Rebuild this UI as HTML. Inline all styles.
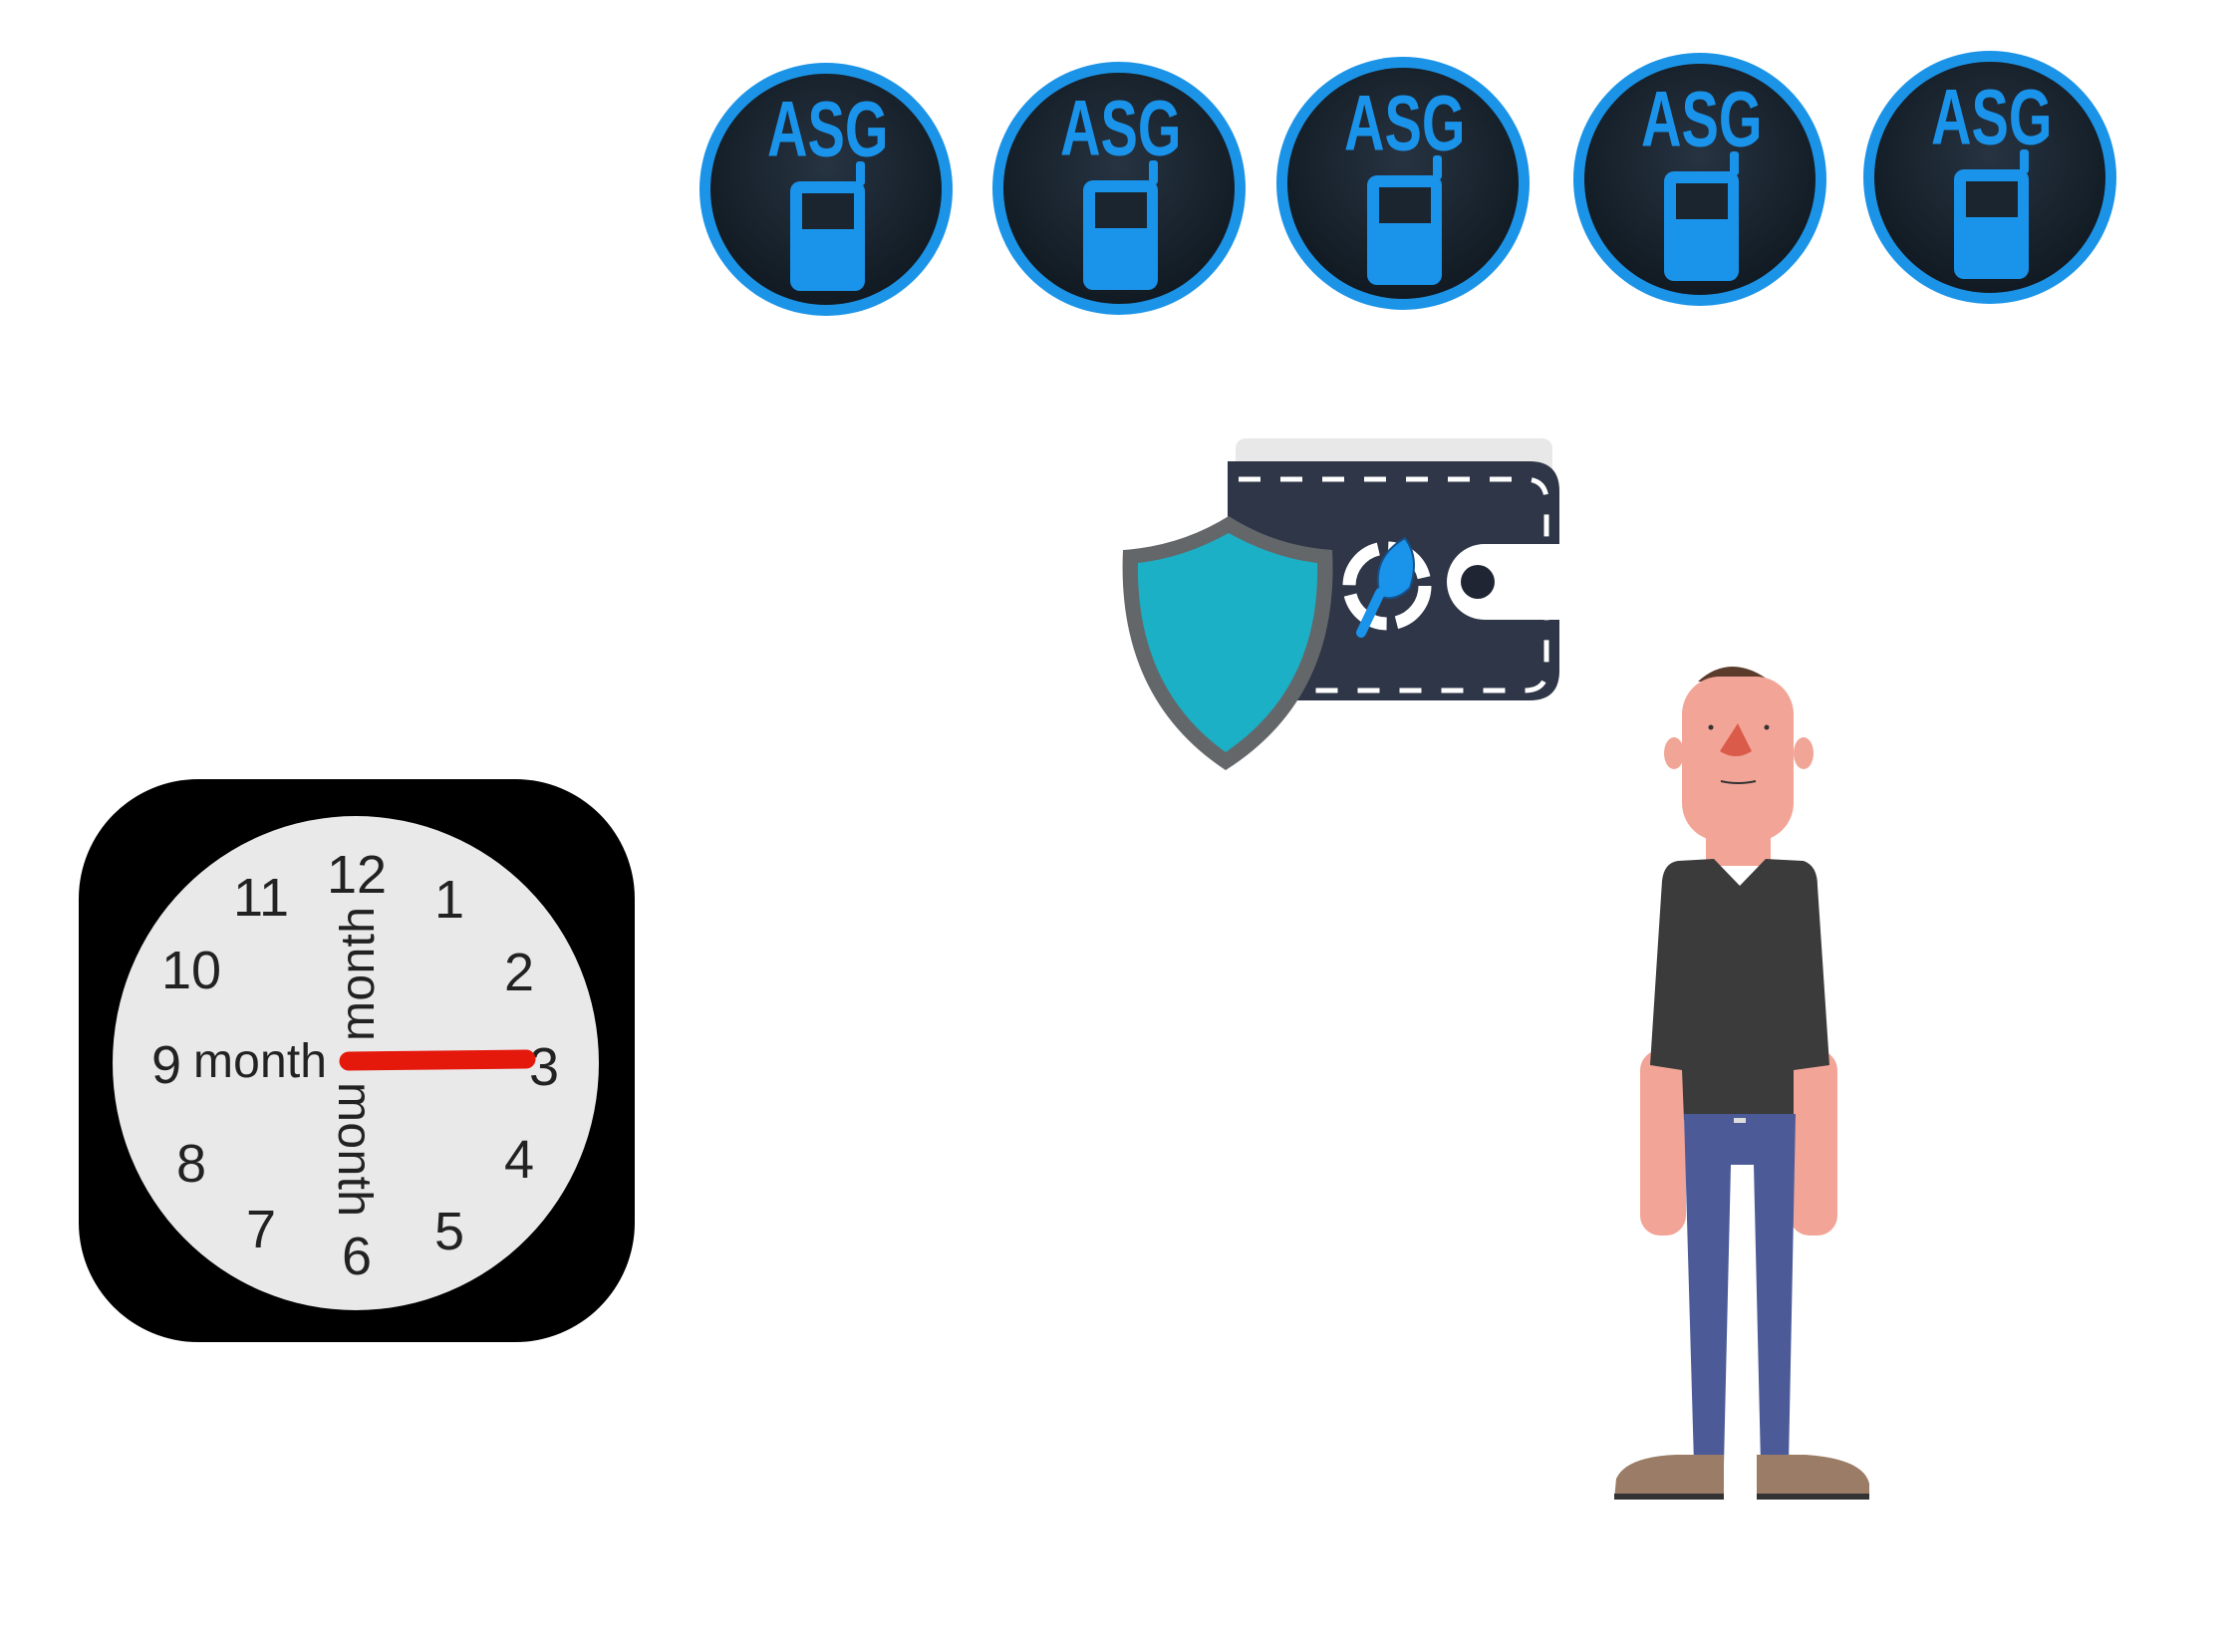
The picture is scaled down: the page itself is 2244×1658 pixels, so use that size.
<!DOCTYPE html>
<html><head><meta charset="utf-8"><style>
html,body{margin:0;padding:0;background:#fff;width:2244px;height:1658px;overflow:hidden}
svg{display:block}
</style></head><body>
<svg width="2244" height="1658" viewBox="0 0 2244 1658" xmlns="http://www.w3.org/2000/svg">
<defs>
<radialGradient id="cg" cx="50%" cy="40%" r="60%"><stop offset="0" stop-color="#263341"/><stop offset="1" stop-color="#111a22"/></radialGradient>
<g id="coin">
<circle r="127" fill="#1b94e8"/>
<circle r="116" fill="url(#cg)"/>
<text x="2" y="-28" text-anchor="middle" font-family="Liberation Sans Narrow, Liberation Sans, sans-serif" font-weight="bold" font-size="66" fill="#1a93ea" transform="scale(0.85,1.2)">ASG</text>
<rect x="-36" y="-8" width="75" height="110" rx="10" fill="#1a93ea"/>
<rect x="-24" y="4" width="52" height="36" fill="#1a2530"/>
<rect x="30" y="-28" width="9" height="24" rx="3" fill="#1a93ea"/>
</g>
</defs>
<use href="#coin" x="829" y="190"/>
<use href="#coin" x="1123" y="189"/>
<use href="#coin" x="1408" y="184"/>
<use href="#coin" x="1706" y="180"/>
<use href="#coin" x="1997" y="178"/>

<!-- wallet -->
<rect x="1240" y="440" width="318" height="40" rx="10" fill="#e8e8e8"/>
<path d="M1232 463 H1535 Q1565 463 1565 493 V673 Q1565 703 1535 703 H1232 Z" fill="#2e3647"/>
<path d="M1243 481 H1530 Q1552 481 1552 503 V672 Q1552 693 1530 693 H1317" fill="none" stroke="#fff" stroke-width="5" stroke-dasharray="22 20"/>
<path d="M1490 546 H1568 V622 H1490 A38 38 0 0 1 1490 546 Z" fill="#fff"/>
<circle cx="1483" cy="584" r="17" fill="#1f2533"/>
<circle cx="1392" cy="588" r="38" fill="none" stroke="#fff" stroke-width="13" stroke-dasharray="50 10"/>
<path d="M1385 598 Q1375 560 1410 540 Q1425 560 1415 590 Q1400 605 1385 598 Z" fill="#1a93ea" stroke="#16508a" stroke-width="2"/>
<line x1="1385" y1="595" x2="1366" y2="635" stroke="#1a93ea" stroke-width="10" stroke-linecap="round"/>

<!-- shield -->
<path d="M1233 518 Q1280 548 1337 552 Q1345 700 1230 773 Q1120 700 1127 552 Q1185 548 1233 518 Z" fill="#646769"/>
<path d="M1233 535 Q1278 560 1322 565 Q1325 690 1230 755 Q1140 690 1142 565 Q1188 560 1233 535 Z" fill="#1bb0c6"/>

<!-- clock -->
<rect x="79" y="782" width="558" height="565" rx="120" fill="#000"/>
<ellipse cx="357" cy="1067" rx="244" ry="248" fill="#e9e9ea"/>
<g font-family="Liberation Sans, sans-serif" font-size="54" fill="#222" text-anchor="middle">
<text x="358" y="896">12</text><text x="451" y="921">1</text><text x="521" y="994">2</text>
<text x="546" y="1089">3</text><text x="521" y="1182">4</text><text x="451" y="1254">5</text>
<text x="358" y="1279">6</text><text x="262" y="1252">7</text><text x="192" y="1186">8</text>
<text x="167" y="1087">9</text><text x="192" y="992">10</text><text x="262" y="919">11</text>
</g>
<g font-family="Liberation Sans, sans-serif" font-size="48" fill="#222">
<text x="194" y="1081" textLength="134">month</text>
<text transform="translate(375,1045) rotate(-90)" textLength="135">month</text>
<text transform="translate(340,1086) rotate(90)" textLength="135">month</text>
</g>
<line x1="350" y1="1065" x2="528" y2="1063" stroke="#e5180c" stroke-width="19" stroke-linecap="round"/>

<!-- man -->
<g transform="translate(-18,-6)">
<path d="M1722 690 Q1755 660 1795 690 Z" fill="#5b3b2b"/>
<ellipse cx="1698" cy="762" rx="10" ry="16" fill="#f0a596"/>
<ellipse cx="1828" cy="762" rx="10" ry="16" fill="#f0a596"/>
<rect x="1706" y="685" width="112" height="165" rx="38" fill="#f2a597"/>
<rect x="1730" y="830" width="65" height="45" fill="#f2a597"/>
<path d="M1744 760 L1762 732 L1776 760 Q1760 770 1744 760 Z" fill="#db5b4a"/>
<path d="M1745 790 Q1762 794 1780 790" stroke="#333" stroke-width="2" fill="none"/>
<circle cx="1735" cy="736" r="2.5" fill="#333"/><circle cx="1791" cy="736" r="2.5" fill="#333"/>
<rect x="1664" y="1060" width="46" height="186" rx="20" fill="#f2a597"/>
<rect x="1814" y="1060" width="48" height="186" rx="20" fill="#f2a597"/>
<path d="M1702 870 L1738 868 L1764 895 L1790 868 L1828 870 Q1842 875 1842 895 L1854 1075 L1818 1080 L1818 1130 L1708 1130 L1706 1080 L1674 1075 L1686 890 Q1688 872 1702 870 Z" fill="#3b3b3b"/>
<path d="M1708 1124 H1820 L1813 1476 H1785 L1778 1175 H1755 L1748 1476 H1718 Z" fill="#4c5b98"/>
<rect x="1758" y="1128" width="12" height="5" fill="#ddd"/>
<path d="M1640 1490 Q1650 1468 1700 1466 L1748 1466 V1511 H1638 Z" fill="#9b7c66"/>
<path d="M1781 1466 L1830 1466 Q1888 1470 1894 1495 V1511 H1781 Z" fill="#9b7c66"/>
<rect x="1638" y="1505" width="110" height="6" fill="#333"/><rect x="1781" y="1505" width="113" height="6" fill="#333"/>
</g>
</svg>
</body></html>
